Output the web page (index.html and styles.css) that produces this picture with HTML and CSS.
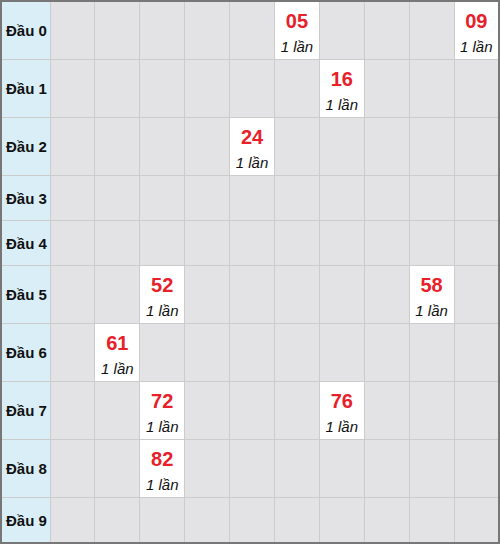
FILE: index.html
```html
<!DOCTYPE html>
<html lang="vi">
<head>
    <meta charset="utf-8">
    <title>Thống kê đầu lô</title>
    <link rel="stylesheet" href="styles.css">
</head>
<body>
    <table class="dau-table">
        <colgroup>
            <col class="col-head">
            <col span="10">
        </colgroup>
        <tr class="has-num">
            <th>Đầu 0</th>
            <td></td><td></td><td></td><td></td><td></td>
            <td class="hit"><div class="num">05</div><div class="times">1 lần</div></td>
            <td></td><td></td><td></td>
            <td class="hit"><div class="num">09</div><div class="times">1 lần</div></td>
        </tr>
        <tr class="has-num">
            <th>Đầu 1</th>
            <td></td><td></td><td></td><td></td><td></td><td></td>
            <td class="hit"><div class="num">16</div><div class="times">1 lần</div></td>
            <td></td><td></td><td></td>
        </tr>
        <tr class="has-num">
            <th>Đầu 2</th>
            <td></td><td></td><td></td><td></td>
            <td class="hit"><div class="num">24</div><div class="times">1 lần</div></td>
            <td></td><td></td><td></td><td></td><td></td>
        </tr>
        <tr class="empty">
            <th>Đầu 3</th>
            <td></td><td></td><td></td><td></td><td></td><td></td><td></td><td></td><td></td><td></td>
        </tr>
        <tr class="empty">
            <th>Đầu 4</th>
            <td></td><td></td><td></td><td></td><td></td><td></td><td></td><td></td><td></td><td></td>
        </tr>
        <tr class="has-num">
            <th>Đầu 5</th>
            <td></td><td></td>
            <td class="hit"><div class="num">52</div><div class="times">1 lần</div></td>
            <td></td><td></td><td></td><td></td><td></td>
            <td class="hit"><div class="num">58</div><div class="times">1 lần</div></td>
            <td></td>
        </tr>
        <tr class="has-num">
            <th>Đầu 6</th>
            <td></td>
            <td class="hit"><div class="num">61</div><div class="times">1 lần</div></td>
            <td></td><td></td><td></td><td></td><td></td><td></td><td></td><td></td>
        </tr>
        <tr class="has-num">
            <th>Đầu 7</th>
            <td></td><td></td>
            <td class="hit"><div class="num">72</div><div class="times">1 lần</div></td>
            <td></td><td></td><td></td>
            <td class="hit"><div class="num">76</div><div class="times">1 lần</div></td>
            <td></td><td></td><td></td>
        </tr>
        <tr class="has-num">
            <th>Đầu 8</th>
            <td></td><td></td>
            <td class="hit"><div class="num">82</div><div class="times">1 lần</div></td>
            <td></td><td></td><td></td><td></td><td></td><td></td><td></td>
        </tr>
        <tr class="empty">
            <th>Đầu 9</th>
            <td></td><td></td><td></td><td></td><td></td><td></td><td></td><td></td><td></td><td></td>
        </tr>
    </table>
</body>
</html>
```

FILE: styles.css
```css
body {
    margin: 0;
    font-family: "Liberation Sans", Arial, Helvetica, sans-serif;
    background-color: #fff;
}

.dau-table {
    width: 500px;
    table-layout: fixed;
    border-collapse: collapse;
    border: 2px solid #777;
}

.col-head {
    width: 49px;
}

.dau-table th,
.dau-table td {
    border: 1px solid #ccc;
    padding: 0;
}

.dau-table th {
    background-color: #d9eef7;
    color: #111;
    font-size: 15px;
    font-weight: bold;
    text-align: left;
    padding-left: 4px;
    white-space: nowrap;
}

.dau-table td {
    background-color: #e3e3e5;
    text-align: center;
    vertical-align: top;
}

.has-num th,
.has-num td {
    height: 57px;
}

.empty th,
.empty td {
    height: 44px;
}

.dau-table td.hit {
    background-color: #fff;
    padding-top: 4px;
    height: 52px;
}

.num {
    color: #e8202a;
    font-size: 20px;
    font-weight: bold;
    line-height: 30px;
}

.times {
    color: #111;
    font-size: 15px;
    font-style: italic;
    line-height: 22px;
}
```
